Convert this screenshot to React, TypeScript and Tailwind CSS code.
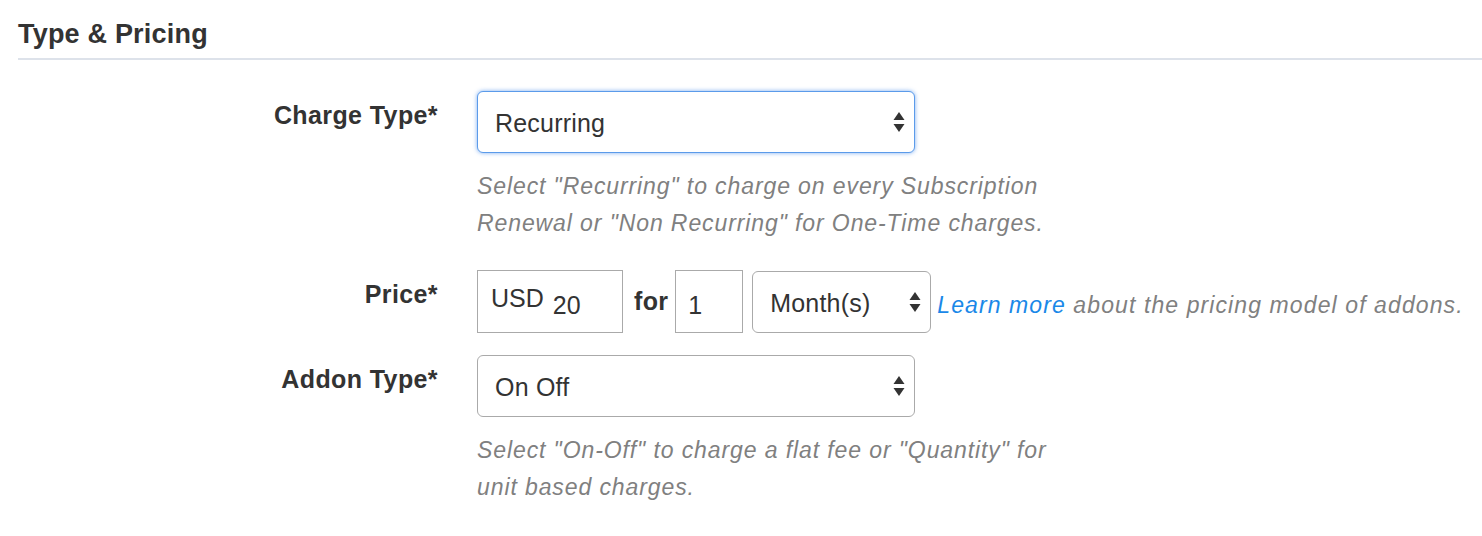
const font = { fontFamily: '"Liberation Sans", Arial, sans-serif' };

function Arrows() {
  return (
    <svg width="14" height="24" viewBox="0 0 14 24" className="shrink-0">
      <path d="M7 2 L12.5 10 L1.5 10 Z" fill="#333" />
      <path d="M1.5 14 L12.5 14 L7 22 Z" fill="#333" />
    </svg>
  );
}

function Select({ value, focused, width }: { value: string; focused?: boolean; width: string }) {
  return (
    <div
      className={`flex h-[62px] items-center justify-between rounded-[6px] border bg-white pl-[17px] pr-[8px] text-[25px] tracking-[0.2px] text-[#333] ${width} ${
        focused ? "border-[#5b9bea] shadow-[0_0_4px_rgba(70,140,235,0.7)]" : "border-[#aaaaaa]"
      }`}
    >
      <span className="pt-[4px]">{value}</span>
      <Arrows />
    </div>
  );
}

function Row({ label, children }: { label: string; children: React.ReactNode }) {
  return (
    <div className="flex">
      <div className="w-[420px] shrink-0 pt-[9px] text-right text-[25px] font-bold leading-[30px] tracking-[0.4px] text-[#333]">{label}</div>
      <div className="ml-[39px]">{children}</div>
    </div>
  );
}

function Help({ lines }: { lines: string[] }) {
  return (
    <p className="mt-[15px] text-[23px] italic leading-[37px] tracking-[0.9px] text-[#808080]">
      {lines.map((l, i) => (
        <span key={i} className="block whitespace-nowrap">
          {l}
        </span>
      ))}
    </p>
  );
}

export default function App() {
  return (
    <div className="min-h-[536px] bg-white pl-[18px] pt-[18px]" style={font}>
      <h2 className="border-b-2 border-[#dde2ea] pb-[8px] text-[27px] font-bold leading-[32px] tracking-[0.2px] text-[#333]">Type &amp; Pricing</h2>

      <div className="mt-[31px] flex flex-col">
        <Row label="Charge Type*">
          <Select value="Recurring" focused width="w-[438px]" />
          <Help lines={['Select "Recurring" to charge on every Subscription', 'Renewal or "Non Recurring" for One-Time charges.']} />
        </Row>

        <div className="mt-[28px]">
          <Row label="Price*">
            <div className="flex items-center">
              <div className="flex h-[63px] w-[146px] items-center border border-[#aaaaaa] pl-[13px] text-[25px] text-[#333]">
                <span className="-mt-[5px]">USD</span>
                <span className="ml-[9px] mt-[9px]">20</span>
              </div>
              <span className="ml-[11px] mr-[7px] pt-[1px] text-[25px] font-bold tracking-[0.3px] text-[#333]">for</span>
              <div className="flex h-[63px] w-[68px] items-center border border-[#aaaaaa] pl-[12px] text-[25px] text-[#333]">
                <span className="mt-[9px]">1</span>
              </div>
              <div className="ml-[9px]">
                <Select value="Month(s)" width="w-[179px]" />
              </div>
              <span className="ml-[6px] whitespace-nowrap pt-[7px] text-[23px] italic tracking-[1.1px] text-[#808080]">
                <a className="text-[#1a88e8]">Learn more</a> about the pricing model of addons.
              </span>
            </div>
          </Row>
        </div>

        <div className="mt-[22px]">
          <Row label="Addon Type*">
            <Select value="On Off" width="w-[438px]" />
            <Help lines={['Select "On-Off" to charge a flat fee or "Quantity" for', "unit based charges."]} />
          </Row>
        </div>
      </div>
    </div>
  );
}
